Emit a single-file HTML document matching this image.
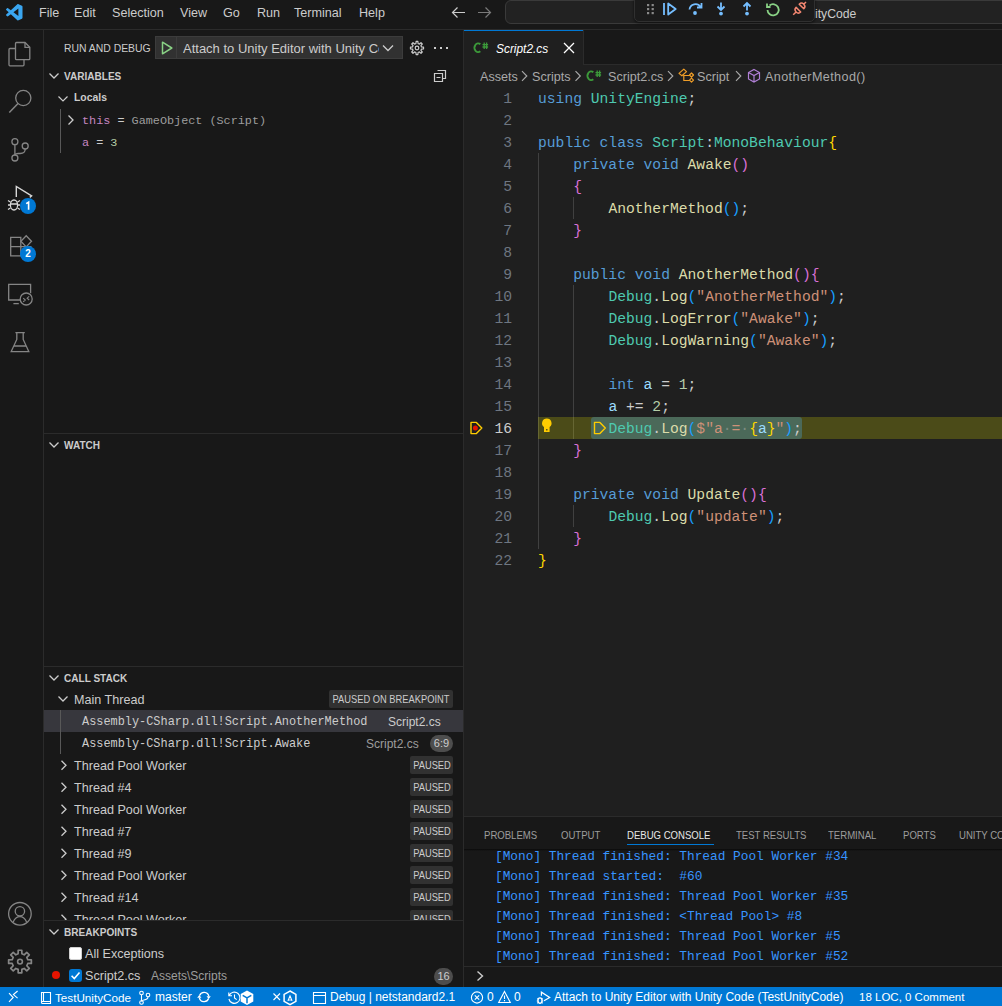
<!DOCTYPE html>
<html><head><meta charset="utf-8">
<style>
*{margin:0;padding:0;box-sizing:border-box}
html,body{width:1002px;height:1006px;overflow:hidden;background:#181818;font-family:"Liberation Sans",sans-serif;color:#cccccc}
.a{position:absolute}
.t{position:absolute;white-space:pre;font-size:12.6px;line-height:22px;padding-top:1px}
.m{font-family:"Liberation Mono",monospace}
svg{position:absolute;overflow:visible}
/* regions */
#title{left:0;top:0;width:1002px;height:29px;background:#181818}
#titleb{left:0;top:29px;width:1002px;height:1px;background:#2b2b2b}
#act{left:0;top:30px;width:43px;height:957px;background:#181818}
#actb{left:43px;top:30px;width:1px;height:957px;background:#2b2b2b}
#side{left:44px;top:30px;width:419px;height:957px;background:#181818}
#sideb{left:463px;top:30px;width:1px;height:957px;background:#2b2b2b}
#editor{left:464px;top:30px;width:538px;height:786px;background:#1f1f1f}
#tabs{left:464px;top:30px;width:538px;height:35px;background:#181818}
#panelb{left:464px;top:816px;width:538px;height:1px;background:#2b2b2b}
#panel{left:464px;top:817px;width:538px;height:170px;background:#181818}
#status{left:0;top:987px;width:1002px;height:19px;background:#0078d4}
.code{font-family:"Liberation Mono",monospace;font-size:14.67px;line-height:22px;padding-top:1px;position:absolute;white-space:pre;left:538px}
.lnact{color:#cccccc!important}
.ws{color:#7d8b80}
.ln{font-family:"Liberation Mono",monospace;font-size:14.67px;line-height:22px;padding-top:1px;position:absolute;white-space:pre;color:#6e7681;text-align:right;left:470px;width:42px}
.k{color:#569cd6}.ty{color:#4ec9b0}.f{color:#dcdcaa}.s{color:#ce9178}.v{color:#9cdcfe}.n{color:#b5cea8}.p{color:#cccccc}
.b1{color:#ffd700}.b2{color:#da70d6}.b3{color:#179fff}
.hdr{font-size:10.05px;font-weight:bold;line-height:22px}
.badge{position:absolute;background:#313131;color:#cccccc;font-size:10.6px;line-height:16px;height:16px;padding:0 4px;border-radius:2px;white-space:pre}
.con{font-family:"Liberation Mono",monospace;font-size:12.8px;line-height:20px;padding-top:1px;position:absolute;white-space:pre;left:495px;color:#3794ff}
.st{position:absolute;white-space:pre;font-size:12px;line-height:19px;color:#ffffff;top:988px}
</style></head><body>
<div class="a" id="title"></div>
<div class="a" id="titleb"></div>
<div class="a" id="act"></div>
<div class="a" id="actb"></div>
<div class="a" id="side"></div>
<div class="a" id="sideb"></div>
<div class="a" id="editor"></div>
<div class="a" id="tabs"></div>
<div class="a" id="panelb"></div>
<div class="a" id="panel"></div>
<div class="a" id="status"></div>


<!-- ACTIVITY BAR ICONS -->
<svg width="44" height="960" style="left:0;top:0" viewBox="0 0 44 960" fill="none" stroke="#858585" stroke-width="1.3">
 <!-- explorer -->
 <path d="M15.5 48.5H10a1 1 0 0 0-1 1v15.3a1 1 0 0 0 1 1h13a1 1 0 0 0 1-1V60"/>
 <path d="M16.5 42.5h8.5l4.8 4.8v11.4a1 1 0 0 1-1 1H16.5a1 1 0 0 1-1-1V43.5a1 1 0 0 1 1-1z"/>
 <path d="M25 42.5v4.8h4.8"/>
 <!-- search -->
 <circle cx="23.3" cy="98" r="7.6"/>
 <path d="M18 103.6L9.3 112.6" stroke-width="1.5"/>
 <!-- scm -->
 <circle cx="14.9" cy="141.7" r="3"/>
 <circle cx="25.2" cy="146" r="3"/>
 <circle cx="14.9" cy="158" r="3"/>
 <path d="M14.9 144.7V155M25.2 149c0 3-2 4.5-5 4.5h-2c-2 0-3.3 .8-3.3 1.5"/>
 <!-- debug -->
 <path d="M16.3 197V186.5L31.6 195.9l-1.8 1.5" stroke="#d7d7d7" stroke-width="1.4" stroke-linejoin="miter"/>
 <g stroke="#d7d7d7" stroke-width="1.3">
  <ellipse cx="14" cy="205" rx="3.6" ry="5"/>
  <path d="M10.4 204h7.2M8 200.5l2.4 1.5M20 200.5l-2.4 1.5M8 205h2.4M17.6 205H20M8 209.5l2.4-1.5M20 209.5l-2.4-1.5"/>
 </g>
 <!-- extensions -->
 <path d="M10.7 237.3h10.1v18.6H10.7zM10.7 246.6h20.1v9.3H20.8"/>
 <path d="M26.2 235.7l5.3 5.6-5.3 5.6-5.3-5.6z"/>
 <!-- remote -->
 <path d="M20 300H8.7V284.3h21.9v9"/>
 <path d="M13.4 303.6h5.4"/>
 <circle cx="26.2" cy="299" r="6"/>
 <path d="M23.2 298.2l2.1 1.8-2.1 1.8M29.2 296.4l-2.1 1.8 2.1 1.8" stroke-width="1.1"/>
 <!-- testing -->
 <path d="M15.4 332.6h9.4M16.8 332.6v6.8L11.2 351.6h17.6L23.2 339.4v-6.8M13.6 346h12.8"/>
 <!-- accounts -->
 <circle cx="19.9" cy="913.8" r="11.3"/>
 <circle cx="19.9" cy="911.3" r="4.7"/>
 <path d="M13.2 922c1.5-3.5 4-5.3 6.7-5.3s5.2 1.8 6.7 5.3"/>
</svg>
<svg width="30" height="30" style="left:5px;top:947px" viewBox="0 0 30 30"><path fill="none" stroke="#858585" stroke-width="1.7" stroke-linejoin="round" d="M13.20 3.24 L16.80 3.24 L16.87 6.82 L19.18 7.78 L21.76 5.30 L24.30 7.84 L21.82 10.42 L22.78 12.73 L26.36 12.80 L26.36 16.40 L22.78 16.47 L21.82 18.78 L24.30 21.36 L21.76 23.90 L19.18 21.42 L16.87 22.38 L16.80 25.96 L13.20 25.96 L13.13 22.38 L10.82 21.42 L8.24 23.90 L5.70 21.36 L8.18 18.78 L7.22 16.47 L3.64 16.40 L3.64 12.80 L7.22 12.73 L8.18 10.42 L5.70 7.84 L8.24 5.30 L10.82 7.78 L13.13 6.82Z"/><circle cx="15" cy="14.6" r="2.4" fill="none" stroke="#858585" stroke-width="1.6"/></svg>
<svg width="16" height="16" style="left:20px;top:198px" viewBox="0 0 16 16"><circle cx="8" cy="8" r="8" fill="#0078d4"/><path d="M6.2 5.6L8.6 4.2V11.8" fill="none" stroke="#fff" stroke-width="1.6"/></svg>
<div class="a" style="left:20px;top:246px;width:16px;height:16px;border-radius:8px;background:#0078d4;color:#fff;font-size:10px;line-height:16px;text-align:center;font-weight:bold">2</div>

<!-- TITLE BAR -->
<div class="t" style="left:39px;top:1px;line-height:22px">File</div>
<div class="t" style="left:74px;top:1px">Edit</div>
<div class="t" style="left:112px;top:1px">Selection</div>
<div class="t" style="left:180px;top:1px">View</div>
<div class="t" style="left:223px;top:1px">Go</div>
<div class="t" style="left:257px;top:1px">Run</div>
<div class="t" style="left:294px;top:1px">Terminal</div>
<div class="t" style="left:359px;top:1px">Help</div>

<!-- EDITOR TAB -->
<div class="a" style="left:464px;top:30px;width:119px;height:35px;background:#1f1f1f;border-top:1px solid #0078d4"></div>
<div class="a" style="left:583px;top:30px;width:1px;height:35px;background:#2b2b2b"></div>
<div class="a" style="left:584px;top:64px;width:418px;height:1px;background:#2b2b2b"></div>
<svg width="16" height="12" style="left:474px;top:42px" viewBox="0 0 16 12" fill="none" stroke="#3c9a3a"><path d="M6.3 2.2A3.6 4.4 0 1 0 6.3 9.3" stroke-width="1.9"/><path d="M10.2 0.5v6.5M12.6 0.5v6.5M8.5 2.6h5.6M8.5 5h5.6" stroke-width="1.3"/></svg>
<div class="t" style="left:496px;top:37px;font-style:italic;color:#ffffff;font-size:11.9px">Script2.cs</div>
<svg width="14" height="14" style="left:562px;top:41px" viewBox="0 0 14 14"><path d="M2 2l10 10M12 2L2 12" fill="none" stroke="#ffffff" stroke-width="1.3"/></svg>

<!-- BREADCRUMBS -->
<div class="t" style="left:480px;top:65px;color:#a9a9a9;font-size:12.6px">Assets</div>
<div class="t" style="left:532px;top:65px;color:#a9a9a9;font-size:12.6px">Scripts</div>
<svg width="16" height="12" style="left:587px;top:70px" viewBox="0 0 16 12" fill="none" stroke="#3c9a3a"><path d="M6.3 2.2A3.6 4.4 0 1 0 6.3 9.3" stroke-width="1.9"/><path d="M10.2 0.5v6.5M12.6 0.5v6.5M8.5 2.6h5.6M8.5 5h5.6" stroke-width="1.3"/></svg>
<div class="t" style="left:608px;top:65px;color:#a9a9a9;font-size:12.6px">Script2.cs</div>
<div class="t" style="left:697px;top:65px;color:#a9a9a9;font-size:12.6px">Script</div>
<div class="t" style="left:765px;top:65px;color:#a9a9a9;font-size:12.6px;letter-spacing:0.4px">AnotherMethod()</div>
<svg width="540" height="22" style="left:464px;top:65px" viewBox="0 0 540 22" fill="none" stroke="#a9a9a9" stroke-width="1.1">
 <path d="M58 6.2l4.8 4.8-4.8 4.8M111.5 6.2l4.8 4.8-4.8 4.8M204 6.2l4.8 4.8-4.8 4.8M272 6.2l4.8 4.8-4.8 4.8" stroke-width="1.15"/>
 <!-- class icon orange -->
 <g stroke="#ee9d28" stroke-width="1.2" stroke-linejoin="round"><path d="M215 8.4L219.8 4.1 222.5 6.6 217.9 10.8z M219.8 10v5.5h5.5M219.8 10.5h5.5M227.5 8l2 2-2 2-2-2z M227.5 13.2l2 2-2 2-2-2z"/></g>
 <!-- method icon purple -->
 <g stroke="#b180d7" stroke-width="1.2"><path d="M290 4.5l5.5 3v6.5l-5.5 3-5.5-3V7.5zM284.5 7.5l5.5 3 5.5-3M290 10.5v6.5"/></g>
</svg>
<!-- EDITOR DECOR -->
<div class="a" style="left:538px;top:153px;width:1px;height:396px;background:#404040"></div>
<div class="a" style="left:573px;top:197px;width:1px;height:22px;background:#404040"></div>
<div class="a" style="left:573px;top:285px;width:1px;height:154px;background:#404040"></div>
<div class="a" style="left:573px;top:505px;width:1px;height:22px;background:#404040"></div>
<div class="a" style="left:538px;top:417px;width:464px;height:22px;background:rgba(255,255,0,0.2)"></div>
<div class="a" style="left:591px;top:417px;width:211px;height:22px;background:#4b6959;border-radius:3px"></div>
<svg width="16" height="16" style="left:468px;top:420px" viewBox="0 0 16 16"><path d="M3 2.4h5.4l5.4 5.6-5.4 5.6H3z" fill="none" stroke="#ffcc00" stroke-width="1.4" stroke-linejoin="round"/><circle cx="7.4" cy="8" r="2.5" fill="#e51400"/></svg>
<svg width="14" height="16" style="left:539px;top:417px" viewBox="0 0 14 16"><path fill-rule="evenodd" d="M7.8 1.6a4.7 4.7 0 0 0-2.8 8.5V15h5.6v-4.9A4.7 4.7 0 0 0 7.8 1.6zM7.1 11.9h1.4v1.5H7.1z" fill="#ffcc00"/></svg>
<svg width="14" height="16" style="left:592px;top:420px" viewBox="0 0 14 16"><path d="M2.5 2.4h5.4l5.4 5.6-5.4 5.6H2.5z" fill="none" stroke="#ffcc00" stroke-width="1.4" stroke-linejoin="round"/></svg>
<!-- CODE -->
<div id="code">
<div class="ln" style="top:87px">1</div>
<div class="code" style="top:87px"><span class="k">using</span> <span class="ty">UnityEngine</span><span class="p">;</span></div>
<div class="ln" style="top:109px">2</div>
<div class="ln" style="top:131px">3</div>
<div class="code" style="top:131px"><span class="k">public</span> <span class="k">class</span> <span class="ty">Script</span><span class="p">:</span><span class="ty">MonoBehaviour</span><span class="b1">{</span></div>
<div class="ln" style="top:153px">4</div>
<div class="code" style="top:153px">    <span class="k">private</span> <span class="k">void</span> <span class="f">Awake</span><span class="b2">()</span></div>
<div class="ln" style="top:175px">5</div>
<div class="code" style="top:175px">    <span class="b2">{</span></div>
<div class="ln" style="top:197px">6</div>
<div class="code" style="top:197px">        <span class="f">AnotherMethod</span><span class="b3">()</span><span class="p">;</span></div>
<div class="ln" style="top:219px">7</div>
<div class="code" style="top:219px">    <span class="b2">}</span></div>
<div class="ln" style="top:241px">8</div>
<div class="ln" style="top:263px">9</div>
<div class="code" style="top:263px">    <span class="k">public</span> <span class="k">void</span> <span class="f">AnotherMethod</span><span class="b2">(){</span></div>
<div class="ln" style="top:285px">10</div>
<div class="code" style="top:285px">        <span class="ty">Debug</span><span class="p">.</span><span class="f">Log</span><span class="b3">(</span><span class="s">"AnotherMethod"</span><span class="b3">)</span><span class="p">;</span></div>
<div class="ln" style="top:307px">11</div>
<div class="code" style="top:307px">        <span class="ty">Debug</span><span class="p">.</span><span class="f">LogError</span><span class="b3">(</span><span class="s">"Awake"</span><span class="b3">)</span><span class="p">;</span></div>
<div class="ln" style="top:329px">12</div>
<div class="code" style="top:329px">        <span class="ty">Debug</span><span class="p">.</span><span class="f">LogWarning</span><span class="b3">(</span><span class="s">"Awake"</span><span class="b3">)</span><span class="p">;</span></div>
<div class="ln" style="top:351px">13</div>
<div class="ln" style="top:373px">14</div>
<div class="code" style="top:373px">        <span class="k">int</span> <span class="v">a</span> <span class="p">=</span> <span class="n">1</span><span class="p">;</span></div>
<div class="ln" style="top:395px">15</div>
<div class="code" style="top:395px">        <span class="v">a</span> <span class="p">+=</span> <span class="n">2</span><span class="p">;</span></div>
<div class="ln lnact" style="top:417px">16</div>
<div class="code" style="top:417px">        <span class="ty">Debug</span><span class="p">.</span><span class="f">Log</span><span class="b3">(</span><span class="s">$"a<span class="ws">·</span>=<span class="ws">·</span></span><span class="b1">{</span><span class="v">a</span><span class="b1">}</span><span class="s">"</span><span class="b3">)</span><span class="p">;</span></div>
<div class="ln" style="top:439px">17</div>
<div class="code" style="top:439px">    <span class="b2">}</span></div>
<div class="ln" style="top:461px">18</div>
<div class="ln" style="top:483px">19</div>
<div class="code" style="top:483px">    <span class="k">private</span> <span class="k">void</span> <span class="f">Update</span><span class="b2">(){</span></div>
<div class="ln" style="top:505px">20</div>
<div class="code" style="top:505px">        <span class="ty">Debug</span><span class="p">.</span><span class="f">Log</span><span class="b3">(</span><span class="s">"update"</span><span class="b3">)</span><span class="p">;</span></div>
<div class="ln" style="top:527px">21</div>
<div class="code" style="top:527px">    <span class="b2">}</span></div>
<div class="ln" style="top:549px">22</div>
<div class="code" style="top:549px"><span class="b1">}</span></div>
</div>

<!-- SIDEBAR -->
<div class="t" style="left:64px;top:37px;font-size:10.4px">RUN AND DEBUG</div>
<div class="a" style="left:155px;top:36px;width:248px;height:23px;background:#313131;border:1px solid #3c3c3c;border-radius:0"></div>
<div class="a" style="left:176px;top:37px;width:1px;height:21px;background:#3c3c3c"></div>
<svg width="14" height="16" style="left:160px;top:40px" viewBox="0 0 14 16"><path d="M2.5 2.2L11.8 8 2.5 13.8z" fill="none" stroke="#89d185" stroke-width="1.5" stroke-linejoin="round"/></svg>
<div class="t" style="left:183px;top:37px;width:196px;overflow:hidden;font-size:13px">Attach to Unity Editor with Unity Code</div>
<svg width="14" height="14" style="left:381px;top:41px" viewBox="0 0 14 14"><path d="M2 4.5l5 5 5-5" fill="none" stroke="#cccccc" stroke-width="1.3"/></svg>
<!-- gear -->
<svg width="16" height="16" style="left:409px;top:40px" viewBox="0 0 16 16"><path d="M7.12 1.46 L8.88 1.46 L9.07 3.53 L10.40 4.08 L12.00 2.75 L13.25 4.00 L11.92 5.60 L12.47 6.93 L14.54 7.12 L14.54 8.88 L12.47 9.07 L11.92 10.40 L13.25 12.00 L12.00 13.25 L10.40 11.92 L9.07 12.47 L8.88 14.54 L7.12 14.54 L6.93 12.47 L5.60 11.92 L4.00 13.25 L2.75 12.00 L4.08 10.40 L3.53 9.07 L1.46 8.88 L1.46 7.12 L3.53 6.93 L4.08 5.60 L2.75 4.00 L4.00 2.75 L5.60 4.08 L6.93 3.53Z" fill="none" stroke="#cccccc" stroke-width="1.2" stroke-linejoin="round"/><circle cx="8" cy="8" r="1.8" fill="none" stroke="#cccccc" stroke-width="1.2"/></svg>
<div class="a" style="left:434px;top:47px;width:2px;height:2px;background:#ccc"></div>
<div class="a" style="left:440px;top:47px;width:2px;height:2px;background:#ccc"></div>
<div class="a" style="left:446px;top:47px;width:2px;height:2px;background:#ccc"></div>

<svg width="12" height="12" style="left:48px;top:70px" viewBox="0 0 12 12"><path d="M1.5 3.5l4.5 4.5 4.5-4.5" fill="none" stroke="#cccccc" stroke-width="1.3"/></svg>
<div class="t hdr" style="left:64px;top:65px">VARIABLES</div>
<svg width="16" height="16" style="left:432px;top:68px" viewBox="0 0 16 16" fill="none" stroke="#cccccc" stroke-width="1.2"><path d="M5.5 2.5h8v8h-3M2.5 5.5h8v8h-8z M4.5 9.5h4"/></svg>
<svg width="12" height="12" style="left:57px;top:93px" viewBox="0 0 12 12"><path d="M1.5 3.5l4.5 4.5 4.5-4.5" fill="none" stroke="#cccccc" stroke-width="1.2"/></svg>
<div class="t" style="left:74px;top:87px;font-size:10.4px;font-weight:bold;padding-top:0">Locals</div>
<div class="a" style="left:60px;top:109px;width:1px;height:44px;background:#585858"></div>
<svg width="12" height="12" style="left:65px;top:114px" viewBox="0 0 12 12"><path d="M3.5 1.5l4.5 4.5-4.5 4.5" fill="none" stroke="#cccccc" stroke-width="1.3"/></svg>
<div class="t m" style="left:82px;top:109px;font-size:11.8px"><span style="color:#c586c0">this</span> = <span style="color:#9d9d9d">GameObject (Script)</span></div>
<div class="t m" style="left:82px;top:131px;font-size:11.8px"><span style="color:#c586c0">a</span> = <span style="color:#b5cea8">3</span></div>

<div class="a" style="left:44px;top:433px;width:419px;height:1px;background:#2b2b2b"></div>
<svg width="12" height="12" style="left:48px;top:439px" viewBox="0 0 12 12"><path d="M1.5 3.5l4.5 4.5 4.5-4.5" fill="none" stroke="#cccccc" stroke-width="1.3"/></svg>
<div class="t hdr" style="left:64px;top:434px">WATCH</div>

<div class="a" style="left:44px;top:666px;width:419px;height:1px;background:#2b2b2b"></div>
<svg width="12" height="12" style="left:48px;top:672px" viewBox="0 0 12 12"><path d="M1.5 3.5l4.5 4.5 4.5-4.5" fill="none" stroke="#cccccc" stroke-width="1.3"/></svg>
<div class="t hdr" style="left:64px;top:667px">CALL STACK</div>
<svg width="12" height="12" style="left:57px;top:693px" viewBox="0 0 12 12"><path d="M1.5 3.5l4.5 4.5 4.5-4.5" fill="none" stroke="#cccccc" stroke-width="1.3"/></svg>
<div class="t" style="left:74px;top:688px">Main Thread</div>
<div class="badge" style="left:329px;top:690px;width:124px;height:18px;line-height:18px;text-align:center;padding:0"><span style="position:absolute;left:50%;top:0;transform:translateX(-50%) scaleX(0.88)">PAUSED ON BREAKPOINT</span></div>
<div class="a" style="left:44px;top:710px;width:419px;height:22px;background:#37373d"></div>
<div class="a" style="left:60px;top:710px;width:1px;height:44px;background:#585858"></div>
<div class="t m" style="left:82px;top:710px;font-size:11.9px;color:#cccccc">Assembly-CSharp.dll!Script.AnotherMethod</div>
<div class="t" style="left:388px;top:710px;font-size:12px;color:#cccccc">Script2.cs</div>
<div class="t m" style="left:82px;top:732px;font-size:11.9px;color:#cccccc">Assembly-CSharp.dll!Script.Awake</div>
<div class="t" style="left:366px;top:732px;font-size:12px;color:#9d9d9d">Script2.cs</div>
<div class="a" style="left:430px;top:735px;width:23px;height:17px;border-radius:9px;background:#4d4d4d;color:#cccccc;font-size:11px;line-height:17px;text-align:center">6:9</div>
<svg width="12" height="12" style="left:58px;top:759px" viewBox="0 0 12 12"><path d="M3.5 1.8l4.5 4.5-4.5 4.5" fill="none" stroke="#cccccc" stroke-width="1.3"/></svg>
<div class="t" style="left:74px;top:754px">Thread Pool Worker</div>
<div class="badge" style="left:410px;top:756px;width:43px;height:18px;line-height:18px;text-align:center;padding:0"><span style="position:absolute;left:50%;top:0;transform:translateX(-50%) scaleX(0.88)">PAUSED</span></div>
<svg width="12" height="12" style="left:58px;top:781px" viewBox="0 0 12 12"><path d="M3.5 1.8l4.5 4.5-4.5 4.5" fill="none" stroke="#cccccc" stroke-width="1.3"/></svg>
<div class="t" style="left:74px;top:776px">Thread #4</div>
<div class="badge" style="left:410px;top:778px;width:43px;height:18px;line-height:18px;text-align:center;padding:0"><span style="position:absolute;left:50%;top:0;transform:translateX(-50%) scaleX(0.88)">PAUSED</span></div>
<svg width="12" height="12" style="left:58px;top:803px" viewBox="0 0 12 12"><path d="M3.5 1.8l4.5 4.5-4.5 4.5" fill="none" stroke="#cccccc" stroke-width="1.3"/></svg>
<div class="t" style="left:74px;top:798px">Thread Pool Worker</div>
<div class="badge" style="left:410px;top:800px;width:43px;height:18px;line-height:18px;text-align:center;padding:0"><span style="position:absolute;left:50%;top:0;transform:translateX(-50%) scaleX(0.88)">PAUSED</span></div>
<svg width="12" height="12" style="left:58px;top:825px" viewBox="0 0 12 12"><path d="M3.5 1.8l4.5 4.5-4.5 4.5" fill="none" stroke="#cccccc" stroke-width="1.3"/></svg>
<div class="t" style="left:74px;top:820px">Thread #7</div>
<div class="badge" style="left:410px;top:822px;width:43px;height:18px;line-height:18px;text-align:center;padding:0"><span style="position:absolute;left:50%;top:0;transform:translateX(-50%) scaleX(0.88)">PAUSED</span></div>
<svg width="12" height="12" style="left:58px;top:847px" viewBox="0 0 12 12"><path d="M3.5 1.8l4.5 4.5-4.5 4.5" fill="none" stroke="#cccccc" stroke-width="1.3"/></svg>
<div class="t" style="left:74px;top:842px">Thread #9</div>
<div class="badge" style="left:410px;top:844px;width:43px;height:18px;line-height:18px;text-align:center;padding:0"><span style="position:absolute;left:50%;top:0;transform:translateX(-50%) scaleX(0.88)">PAUSED</span></div>
<svg width="12" height="12" style="left:58px;top:869px" viewBox="0 0 12 12"><path d="M3.5 1.8l4.5 4.5-4.5 4.5" fill="none" stroke="#cccccc" stroke-width="1.3"/></svg>
<div class="t" style="left:74px;top:864px">Thread Pool Worker</div>
<div class="badge" style="left:410px;top:866px;width:43px;height:18px;line-height:18px;text-align:center;padding:0"><span style="position:absolute;left:50%;top:0;transform:translateX(-50%) scaleX(0.88)">PAUSED</span></div>
<svg width="12" height="12" style="left:58px;top:891px" viewBox="0 0 12 12"><path d="M3.5 1.8l4.5 4.5-4.5 4.5" fill="none" stroke="#cccccc" stroke-width="1.3"/></svg>
<div class="t" style="left:74px;top:886px">Thread #14</div>
<div class="badge" style="left:410px;top:888px;width:43px;height:18px;line-height:18px;text-align:center;padding:0"><span style="position:absolute;left:50%;top:0;transform:translateX(-50%) scaleX(0.88)">PAUSED</span></div>
<svg width="12" height="12" style="left:58px;top:913px" viewBox="0 0 12 12"><path d="M3.5 1.8l4.5 4.5-4.5 4.5" fill="none" stroke="#cccccc" stroke-width="1.3"/></svg>
<div class="t" style="left:74px;top:908px">Thread Pool Worker</div>
<div class="badge" style="left:410px;top:910px;width:43px;height:18px;line-height:18px;text-align:center;padding:0"><span style="position:absolute;left:50%;top:0;transform:translateX(-50%) scaleX(0.88)">PAUSED</span></div>

<div class="a" style="left:44px;top:920px;width:419px;height:67px;background:#181818"></div>
<div class="a" style="left:44px;top:920px;width:419px;height:1px;background:#2b2b2b"></div>
<svg width="12" height="12" style="left:48px;top:926px" viewBox="0 0 12 12"><path d="M1.5 3.5l4.5 4.5 4.5-4.5" fill="none" stroke="#cccccc" stroke-width="1.3"/></svg>
<div class="t hdr" style="left:64px;top:921px">BREAKPOINTS</div>
<div class="a" style="left:69px;top:947px;width:13px;height:13px;border-radius:2px;background:#ffffff;border:1px solid #d0d0d0"></div>
<div class="t" style="left:85px;top:942px">All Exceptions</div>
<div class="a" style="left:52px;top:971px;width:8px;height:8px;border-radius:4px;background:#e51400"></div>
<div class="a" style="left:69px;top:969px;width:13px;height:13px;border-radius:3px;background:#0078d4"></div>
<svg width="13" height="13" style="left:69px;top:969px" viewBox="0 0 13 13"><path d="M2.6 6.8l2.7 2.7 5.2-6" fill="none" stroke="#fff" stroke-width="1.6"/></svg>
<div class="t" style="left:85px;top:964px">Script2.cs</div>
<div class="t" style="left:151px;top:964px;font-size:12px;color:#9d9d9d">Assets\Scripts</div>
<div class="a" style="left:434px;top:968px;width:19px;height:17px;border-radius:9px;background:#4d4d4d;color:#cccccc;font-size:11px;line-height:17px;text-align:center">16</div>

<!-- PANEL -->
<div class="t" style="left:484px;top:823px;font-size:11px;transform:scaleX(0.87);transform-origin:0 0;color:#9d9d9d">PROBLEMS</div>
<div class="t" style="left:561px;top:823px;font-size:11px;transform:scaleX(0.87);transform-origin:0 0;color:#9d9d9d">OUTPUT</div>
<div class="t" style="left:627px;top:823px;font-size:11px;transform:scaleX(0.87);transform-origin:0 0;color:#e7e7e7">DEBUG CONSOLE</div>
<div class="a" style="left:627px;top:844px;width:87px;height:1px;background:#0078d4"></div>
<div class="t" style="left:736px;top:823px;font-size:11px;transform:scaleX(0.87);transform-origin:0 0;color:#9d9d9d">TEST RESULTS</div>
<div class="t" style="left:828px;top:823px;font-size:11px;transform:scaleX(0.87);transform-origin:0 0;color:#9d9d9d">TERMINAL</div>
<div class="t" style="left:903px;top:823px;font-size:11px;transform:scaleX(0.87);transform-origin:0 0;color:#9d9d9d">PORTS</div>
<div class="t" style="left:959px;top:823px;font-size:11px;transform:scaleX(0.87);transform-origin:0 0;color:#9d9d9d">UNITY CONSOLE</div>
<div class="con" style="top:846px">[Mono] Thread finished: Thread Pool Worker #34</div>
<div class="con" style="top:866px">[Mono] Thread started:  #60</div>
<div class="con" style="top:886px">[Mono] Thread finished: Thread Pool Worker #35</div>
<div class="con" style="top:906px">[Mono] Thread finished: &lt;Thread Pool&gt; #8</div>
<div class="con" style="top:926px">[Mono] Thread finished: Thread Pool Worker #5</div>
<div class="con" style="top:946px">[Mono] Thread finished: Thread Pool Worker #52</div>
<div class="a" style="left:464px;top:849px;width:538px;height:2px;background:linear-gradient(#0a0a0a,rgba(24,24,24,0))"></div>
<div class="a" style="left:464px;top:966px;width:538px;height:1px;background:#2b2b2b"></div>
<svg width="12" height="14" style="left:474px;top:969px" viewBox="0 0 12 14"><path d="M3.5 2.5l5 4.5-5 4.5" fill="none" stroke="#cccccc" stroke-width="1.4"/></svg>

<!-- STATUS -->
<svg width="1002" height="19" style="left:0;top:988px" viewBox="0 0 1002 19" fill="none" stroke="#ffffff" stroke-width="1.1">
 <path d="M9 5.2l4.2 4.3-4.2 4.3M17.6 3l-4.2 3.6 4.2 3.6"/>
 <!-- book -->
 <path d="M41.5 4.5h9v11h-8a1 1 0 0 1-1-1zM41.5 13.5h9M43.5 4.5v9"/>
 <!-- branch -->
 <circle cx="141.5" cy="5" r="1.8"/><circle cx="148" cy="7" r="1.8"/><circle cx="141.5" cy="14.5" r="1.8"/>
 <path d="M141.5 6.8v5.9M148 8.8c0 2.5-2 3-4 3.2-1.6.2-2.5 .8-2.5 1.5"/>
 <!-- sync -->
 <path d="M199.6 7.4A4.8 4.8 0 0 1 208.8 8.2M208.6 10.6A4.8 4.8 0 0 1 199.4 9.8" stroke-width="1.3"/><path d="M206.6 8.3h4.2l-2.1 2.6z M197.2 9.7h4.2l-2.1-2.6z" fill="#fff" stroke="none"/>
 <!-- history -->
 <path d="M229.2 7.5a5.6 5.6 0 1 1-.3 3.5M228.8 4.5v3.2h3.2"/><path d="M234.5 6.5v3.5l2.2 1.6"/>
 <!-- unity -->
 <path d="M247 2.5l6.3 3.6v7.3L247 17l-6.3-3.6V6.1z" fill="#fff" stroke="none"/><path d="M247 9.8v5.5M247 9.8l4.3-2.5M247 9.8l-4.3-2.5" stroke="#0078d4" stroke-width="1.5"/>
 <!-- x -->
 <path d="M273.5 5.5l6.5 6.5M280 5.5l-6.5 6.5"/>
 <!-- hex -->
 <path d="M290 3l5.9 3.4v6.9L290 16.6l-5.9-3.3V6.4z" stroke-width="1.5"/><path d="M290 6.5l2.6 6.3h-5.2z" fill="#fff" stroke="none"/><path d="M290 10v2.8" stroke="#0078d4" stroke-width="1"/>
 <!-- window -->
 <path d="M313.5 4.5h12v11h-12zM313.5 7.5h12"/>
 <!-- error -->
 <circle cx="477" cy="9.5" r="5.6"/><path d="M474.8 7.3l4.4 4.4M479.2 7.3l-4.4 4.4"/>
 <!-- warning -->
 <path d="M504.5 3.5l5.8 11h-11.6z M504.5 7.5v3.5M504.5 12v1.2"/>
 <!-- debug attach -->
 <path d="M541.4 7.8V4.2L549.7 9.5 544 12.7" stroke-width="1.2"/>
 <ellipse cx="540" cy="12.6" rx="2" ry="2.7" stroke-width="1.3"/><path d="M537 10.5l1 .8M543 10.5l-1 .8M536.8 13h1.2M543.2 13H542M537 15.3l1-.8M543 15.3l-1-.8" stroke-width="1"/>
</svg>
<div class="st" style="left:55px;font-size:11.7px">TestUnityCode</div>
<div class="st" style="left:155px">master</div>
<div class="st" style="left:330px">Debug | netstandard2.1</div>
<div class="st" style="left:487px">0</div>
<div class="st" style="left:514px">0</div>
<div class="st" style="left:554px">Attach to Unity Editor with Unity Code (TestUnityCode)</div>
<div class="st" style="left:859px;font-size:11.5px">18 LOC, 0 Comment</div>

<!-- TITLE ICONS -->
<svg width="16.5" height="16.5" style="left:5.5px;top:4px" viewBox="0 0 100 100">
 <path d="M96.5 10.8L75.9 0.9c-2.4-1.1-5.2-.6-7.1 1.2L29.4 38 12.2 25c-1.6-1.2-3.8-1.1-5.3 .2L1.4 30.3c-1.8 1.6-1.8 4.5 0 6.1L16.3 50 1.4 63.6c-1.8 1.6-1.8 4.5 0 6.1l5.5 5c1.5 1.3 3.7 1.4 5.3 .2L29.4 62l39.4 35.9c1.9 1.8 4.7 2.3 7.1 1.2l20.6-9.9c2.2-1 3.5-3.2 3.5-5.6V16.4c0-2.4-1.4-4.6-3.5-5.6zM75 72.7L45.1 50 75 27.3z" fill="#3aa6f0"/>
</svg>
<svg width="60" height="24" style="left:448px;top:0" viewBox="0 0 60 24" fill="none" stroke="#cccccc" stroke-width="1.2">
 <path d="M17 12.5H4.5M9.5 7.5l-5 5 5 5"/>
 <path d="M30 12.5h12.5M37.5 7.5l5 5-5 5" stroke="#7a7a7a"/>
</svg>
<div class="a" style="left:505px;top:0px;width:520px;height:24px;border-radius:6px;background:#222222;border:1px solid #3a3a3a"></div>
<div class="t" style="left:815px;top:2px;font-size:12.2px">ityCode</div>
<div class="a" style="left:634px;top:-6px;width:181px;height:28px;border-radius:5px;background:#1b1b1b;border:1px solid #303030;box-shadow:0 1px 3px rgba(0,0,0,.6)"></div>
<svg width="180" height="24" style="left:634px;top:0" viewBox="0 0 180 24" fill="none" stroke="#75beff" stroke-width="1.8">
 <g fill="#8a8a8a" stroke="none"><rect x="13" y="4" width="2.2" height="2.2"/><rect x="17.6" y="4" width="2.2" height="2.2"/><rect x="13" y="8" width="2.2" height="2.2"/><rect x="17.6" y="8" width="2.2" height="2.2"/><rect x="13" y="12" width="2.2" height="2.2"/><rect x="17.6" y="12" width="2.2" height="2.2"/></g>
 <path d="M30 3v12M34.2 3.5v11l7.5-5.5z" stroke-linejoin="round"/>
 <path d="M55.5 9.5a6 6 0 0 1 11-2.5M67.5 3v4.5h-4.5"/><circle cx="61" cy="13" r="1.9" fill="#75beff" stroke="none"/>
 <path d="M87 2.5v7.5M83.5 6.5l3.5 3.5 3.5-3.5"/><circle cx="87" cy="13.6" r="1.9" fill="#75beff" stroke="none"/>
 <path d="M113 10.5V3M109.5 6.5l3.5-3.5 3.5 3.5"/><circle cx="113" cy="13.6" r="1.9" fill="#75beff" stroke="none"/>
 <path d="M135.5 5.5a5.6 5.6 0 1 1-2 4.5M133 3.5v3.5h3.5" stroke="#89d185"/>
 <path d="M165.2 4.2L169.8 8.8A3.25 3.25 0 0 0 165.2 4.2zM166.7 12L162.1 7.4A3.25 3.25 0 0 0 166.7 12zM170 4l2-2M161.8 12.2l-2.6 2.6" stroke="#f48771" stroke-width="1.5" stroke-linejoin="round"/>
</svg>
</body></html>
